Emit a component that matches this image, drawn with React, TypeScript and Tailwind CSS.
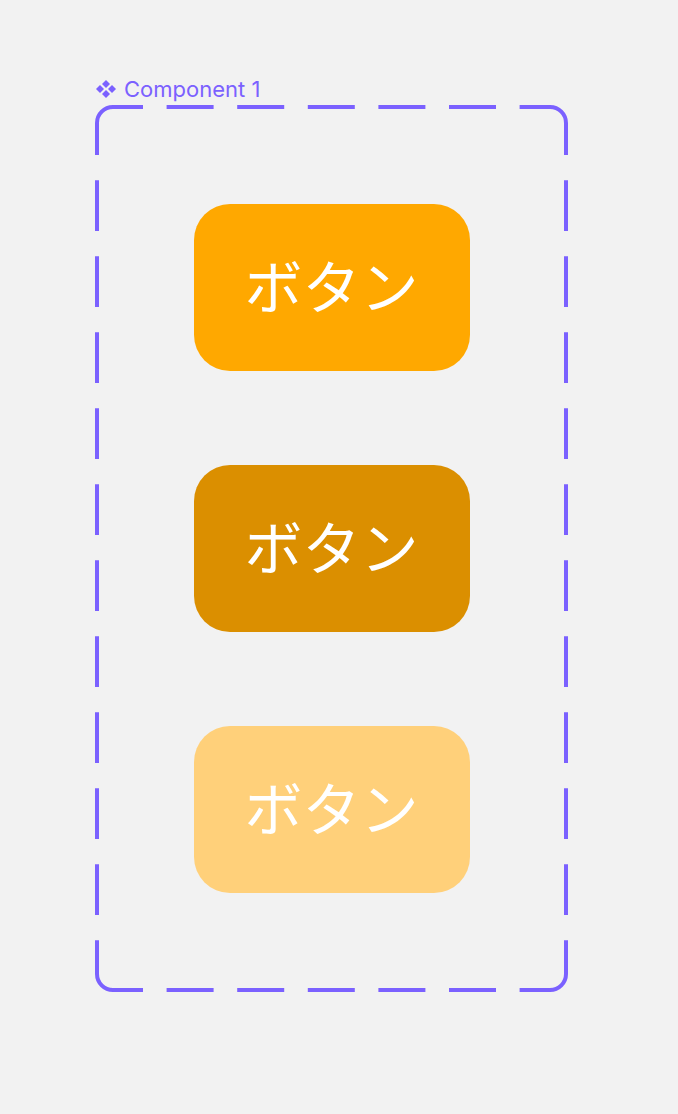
import React from "react";

const FRAME_W = 473;
const FRAME_H = 887;

function ComponentIcon() {
  // four small diamonds arranged in a diamond, Figma-style
  return (
    <svg width="22" height="20" viewBox="0 0 22 20" fill="#7b61ff">
      <path d="M11 1 L15 5 L11 9 L7 5 Z" />
      <path d="M5 6 L9 10 L5 14 L1 10 Z" />
      <path d="M17 6 L21 10 L17 14 L13 10 Z" />
      <path d="M11 11 L15 15 L11 19 L7 15 Z" />
    </svg>
  );
}

function DashedFrame() {
  // stroke centre inset by 2px, corner radius 16
  const x0 = 2;
  const y0 = 2;
  const x1 = FRAME_W - 2;
  const y1 = FRAME_H - 2;
  const r = 16;
  const stroke = "#7b61ff";
  const sw = 4;
  return (
    <svg
      className="absolute inset-0 pointer-events-none"
      width={FRAME_W}
      height={FRAME_H}
      viewBox={`0 0 ${FRAME_W} ${FRAME_H}`}
      fill="none"
    >
      {/* corners */}
      <path
        d={`M ${x0} ${y0 + r} A ${r} ${r} 0 0 1 ${x0 + r} ${y0}
            M ${x1 - r} ${y0} A ${r} ${r} 0 0 1 ${x1} ${y0 + r}
            M ${x1} ${y1 - r} A ${r} ${r} 0 0 1 ${x1 - r} ${y1}
            M ${x0 + r} ${y1} A ${r} ${r} 0 0 1 ${x0} ${y1 - r}`}
        stroke={stroke}
        strokeWidth={sw}
      />
      {/* horizontal sides */}
      <path
        d={`M ${x0 + r} ${y0} L ${x1 - r} ${y0} M ${x0 + r} ${y1} L ${x1 - r} ${y1}`}
        stroke={stroke}
        strokeWidth={sw}
        strokeDasharray="47 23.6"
        strokeDashoffset={17}
      />
      {/* vertical sides */}
      <path
        d={`M ${x0} ${y0 + r} L ${x0} ${y1 - r} M ${x1} ${y0 + r} L ${x1} ${y1 - r}`}
        stroke={stroke}
        strokeWidth={sw}
        strokeDasharray="50.7 25.3"
        strokeDashoffset={18.7}
      />
    </svg>
  );
}

function Button({ className }: { className: string }) {
  return (
    <div
      className={`flex items-center justify-center w-[276px] h-[167px] rounded-[36px] text-white text-[58px] leading-none ${className}`}
      style={{ fontFamily: '"Noto Sans CJK JP", "Noto Sans", sans-serif' }}
    >
      <span className="-mt-[8px]">ボタン</span>
    </div>
  );
}

export default function App() {
  return (
    <div className="min-h-[1114px] w-full bg-[#f2f2f2] pl-[95px] pt-[77px]">
      {/* component label */}
      <div className="flex items-center gap-[7px] h-[24px] text-[#7b61ff] text-[22px] leading-none font-['Inter',sans-serif]">
        <ComponentIcon />
        <span>Component 1</span>
      </div>

      {/* component frame */}
      <div className="relative mt-[4px] w-[473px] h-[887px] flex flex-col items-center justify-center gap-[94px]">
        <DashedFrame />
        <Button className="bg-[#ffa800]" />
        <Button className="bg-[#db8f00]" />
        <Button className="bg-[#ffd07a]" />
      </div>
    </div>
  );
}
